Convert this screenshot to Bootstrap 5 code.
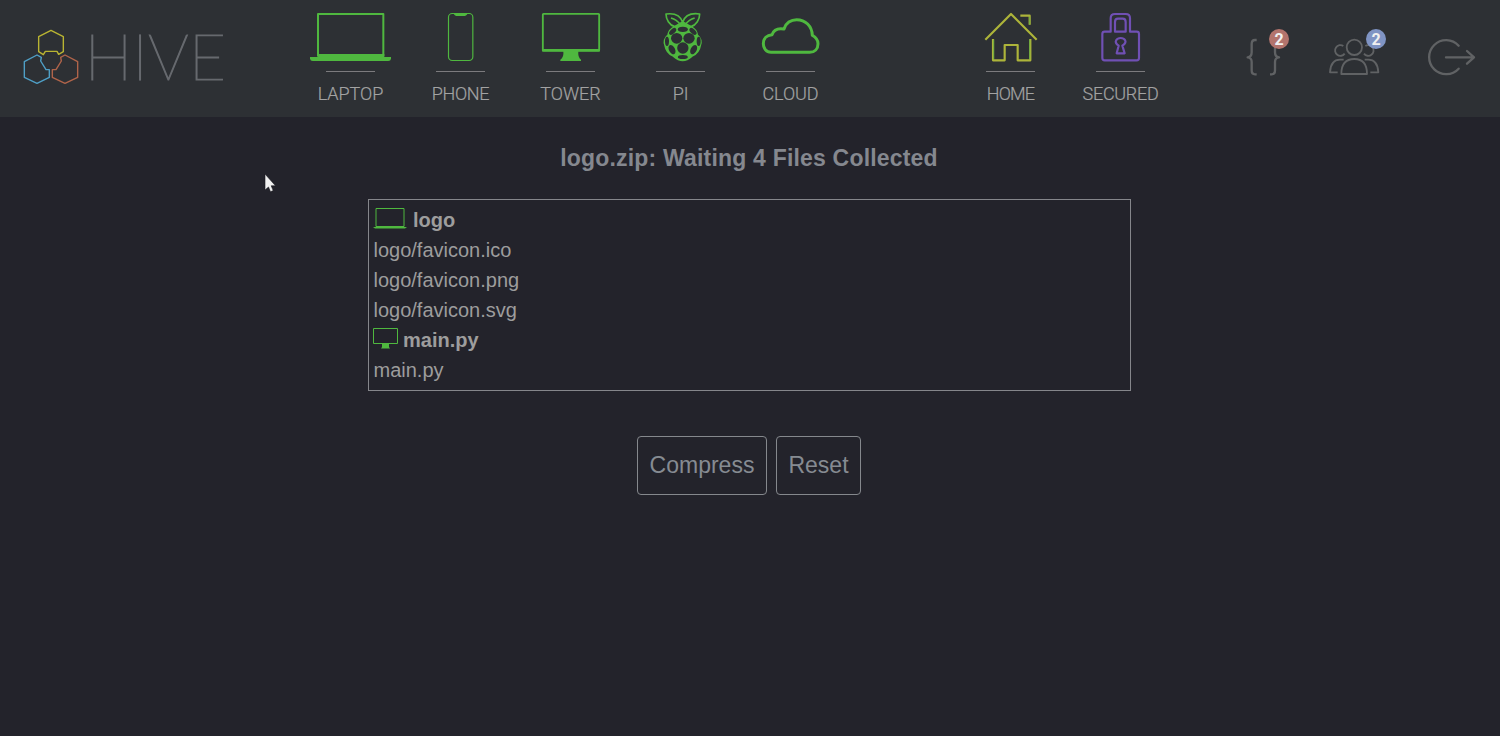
<!DOCTYPE html>
<html lang="en">
<head>
<meta charset="utf-8">
<meta name="viewport" content="width=device-width, initial-scale=1">
<title>Hive</title>
<link rel="stylesheet" href="https://cdn.jsdelivr.net/npm/bootstrap@5.3.0/dist/css/bootstrap.min.css">
<style>
body{background:#23232b;color:#9d9d9d;font-family:"Liberation Sans",Arial,sans-serif;height:736px;overflow:hidden}
svg{display:block;fill:none;stroke-linejoin:round}
.topbar{height:117px;background:#2d3034}
.brand{width:295px;padding:20px 0 0 10px}
.brand svg{width:72px;height:75px}
.wordmark{font:100 64px/75px Lato,sans-serif;color:#66696e;margin:-2.5px 0 0 2.5px;-webkit-text-stroke:1.2px #66696e}
.dest{width:110px;color:#a3a3a3;text-decoration:none}
.dest svg{width:110px;height:62px}
.dest .rule{width:49px;height:1px;background:#7c7b7e;margin:9px auto 0}
.dest .name{font:300 18px/22px Roboto,sans-serif;margin-top:11px;white-space:nowrap;letter-spacing:-.3px;padding-left:1px;-webkit-text-stroke:.2px #a3a3a3}
.gap-dest{width:110px}
.tools{margin-left:55px;padding-top:15px}
.tools svg{height:75px;stroke:#606264;stroke-width:7}
.count{position:absolute;top:14px;width:20px;height:20px;font:700 16px/21px Roboto,sans-serif;color:#f0f0f0}
.heading{font-size:23px;font-weight:700;line-height:30px;color:#85888f;margin:26px 2px 26px 0;letter-spacing:.19px}
.files{width:763px;margin-left:368px;border:1px solid #85868b;padding:5px 4.5px;font-size:20px;line-height:30px}
.files svg{height:22px;margin:-4px 1px 0 -1px}
.act{--bs-btn-color:#868b92;--bs-btn-border-color:#85888d;--bs-btn-border-radius:4px;--bs-btn-font-size:23px;--bs-btn-padding-x:0;height:59px}
.pointer{position:absolute;left:264px;top:173px;width:12px;height:20px}
</style>
</head>
<body>
<header class="topbar d-flex">
  <div class="brand d-flex">
    <svg viewBox="0 0 216 225" stroke-width="4.2">
      <path stroke="#b9b432" d="M123 31L160 50V95L146 103L141 94H106L100 104L86 95V50Z"/>
      <path stroke="#4f9fc6" d="M81 105L94 112L92 123L108 149H118V172L81 190L43 172V125Z"/>
      <path stroke="#b0644a" d="M165 105L152 112L154 123L138 149H127V172L165 190L203 172V125Z"/>
    </svg>
    <span class="wordmark">HIVE</span>
  </div>
  <nav class="d-flex text-center">
    <a class="dest"><svg viewBox="0 0 330 186"><path stroke="#4fb83f" stroke-width="6" d="M69 168V42H265V168"/><path fill="#4fb83f" d="M67 162H268V171H288V176Q287 183 280 183H53Q46 183 45 176V171H67Z"/></svg><div class="rule"></div><div class="name" style="letter-spacing:-.05px">LAPTOP</div></a>
    <a class="dest"><svg viewBox="0 0 330 186"><rect x="130.500" y="40.500" width="73" height="141" rx="11" stroke="#4fb83f" stroke-width="3.500"/><path fill="#4fb83f" d="M145 40H189Q184 48 180 48H153Q148 47 145 40Z"/></svg><div class="rule"></div><div class="name">PHONE</div></a>
    <a class="dest"><svg viewBox="0 0 330 186"><rect x="83.500" y="41.500" width="169" height="111" rx="2" stroke="#4fb83f" stroke-width="5.500"/><path fill="#4fb83f" d="M81 147H255V154H190Q188 173 198 179V183H136V179Q147 173 145 154H81Z"/></svg><div class="rule"></div><div class="name" style="letter-spacing:0">TOWER</div></a>
    <a class="dest"><svg viewBox="0 0 330 186" stroke="#4fb83f" stroke-width="5">
      <path d="M173 67C167 48 152 38 123 42C123 58 133 75 149 80Q164 79 173 67C179 48 195 38 224 42C224 58 214 75 198 80Q182 79 173 67M138 54Q155 59 166 73M209 54Q192 59 181 73"/>
      <path fill="#4fb83f" d="M149 80L173 66L198 80Q214 88 217 105Q232 119 226 135Q222 159 201 168Q186 181 173 181Q160 181 145 168Q124 159 120 135Q114 119 129 105Q132 88 149 80Z"/>
      <g fill="#2d3034" stroke="none"><ellipse cx="173.500" cy="88" rx="15" ry="8"/><ellipse cx="155" cy="115" rx="17" ry="16"/><ellipse cx="192" cy="115" rx="17" ry="16"/><circle cx="173.500" cy="144" r="17"/><ellipse cx="143" cy="94" rx="13" ry="7" transform="rotate(-43 143 94)"/><ellipse cx="204" cy="94" rx="13" ry="7" transform="rotate(43 204 94)"/><ellipse cx="126" cy="124" rx="6" ry="14"/><ellipse cx="221" cy="124" rx="6" ry="14"/><ellipse cx="141" cy="149" rx="9" ry="15" transform="rotate(-27 141 149)"/><ellipse cx="206" cy="149" rx="9" ry="15" transform="rotate(27 206 149)"/><ellipse cx="173.500" cy="171" rx="15" ry="6"/></g></svg><div class="rule"></div><div class="name">PI</div></a>
    <a class="dest"><svg viewBox="0 0 330 186"><path stroke="#4fb83f" stroke-width="9" d="M108 157C93 157 85 144 85 131C85 115 96 105 111 104C116 90 130 84 147 87C152 69 168 59 185 59C211 59 231 78 232 106C242 112 249 119 249 131C249 147 239 157 224 157Z"/></svg><div class="rule"></div><div class="name" style="letter-spacing:-.1px">CLOUD</div></a>
    <span class="gap-dest"></span>
    <a class="dest"><svg viewBox="0 0 330 186" stroke="#adb43a" stroke-width="6.5"><path d="M91 119L168 42L245 119M196 47H224V74M114 117V181H149V135H188V181H226V117"/><path stroke="#6faf40" stroke-width="3" d="M116 119V178M224 119V178M224 50V74"/></svg><div class="rule"></div><div class="name" style="letter-spacing:-.8px">HOME</div></a>
    <a class="dest"><svg viewBox="0 0 330 186" stroke="#7050b4" stroke-width="6.5"><path d="M137 95V55Q137 42 150 42H182Q195 42 195 55V95H215Q222 95 222 102V174Q222 181 215 181H119Q112 181 112 174V102Q112 95 119 95ZM150 95V66Q150 56 159 56H173Q182 56 182 66V95Z"/><path d="M155 160L161 137C143 124 157 114 167 114C177 114 191 124 172 137L179 160Z"/></svg><div class="rule"></div><div class="name">SECURED</div></a>
  </nav>
  <div class="tools d-flex text-center">
    <div class="position-relative"><svg width="86" viewBox="0 0 258 225"><path d="M80 75H75Q65 75 65 87V112Q65 126 53 127Q65 128 65 141V166Q65 178 75 178H80M120 75H125Q135 75 135 87V112Q135 126 147 127Q135 128 135 141V166Q135 178 125 178H120"/></svg><span class="count rounded-circle" style="left:39px;background:#b3746d">2</span></div>
    <div class="position-relative"><svg width="96" viewBox="258 0 288 225" style="stroke-width:5.500"><circle cx="373" cy="97" r="23"/><path d="M334 177Q334 132 373 132Q411 132 411 177ZM340 93A16 16 0 1 0 344 116M406 93A16 16 0 1 1 402 116M323 172H300Q302 134 330 134H341M421 172H445Q443 134 415 134H404"/></svg><span class="count rounded-circle" style="left:50px;background:#7f94c4">2</span></div>
    <div><svg width="78" viewBox="546 0 234 225"><path stroke-linecap="round" d="M686 92A51 51 0 1 0 686 161M648 127H732M711 108L732 127L711 146"/></svg></div>
  </div>
</header>
<main>
  <h1 class="heading text-center">logo.zip: Waiting 4 Files Collected</h1>
  <section class="files">
    <div class="d-flex align-items-center fw-bold"><svg width="34" viewBox="0 0 34 22"><rect x="3" y="1.500" width="28" height="18" stroke="#4fb83f"/><path fill="#4fb83f" d="M3 19H31V20H34L32 21.500H2L0 20H3Z"/></svg><span style="margin-left:5.500px">logo</span></div>
    <div>logo/favicon.ico</div>
    <div>logo/favicon.png</div>
    <div>logo/favicon.svg</div>
    <div class="d-flex align-items-center fw-bold"><svg width="25" viewBox="0 0 25 22"><rect x=".5" y="1.500" width="24" height="15" stroke="#4fb83f"/><path fill="#4fb83f" d="M9 17H16V20L17 21.500H8L9 20Z"/></svg><span style="margin-left:4.500px">main.py</span></div>
    <div>main.py</div>
  </section>
  <div class="d-flex" style="margin:45px 0 0 637px;gap:9px">
    <button class="btn act" style="width:130px">Compress</button>
    <button class="btn act" style="width:85px">Reset</button>
  </div>
</main>
<svg class="pointer" viewBox="0 0 12 20"><path fill="#f1f1f1" stroke="#18181e" stroke-width=".6" d="M1 1V17L4.500 14L6.500 18.800L9.200 17.600L7.200 12.800H11.500Z"/></svg>
<script src="https://cdn.jsdelivr.net/npm/bootstrap@5.3.0/dist/js/bootstrap.bundle.min.js"></script>
</body>
</html>
